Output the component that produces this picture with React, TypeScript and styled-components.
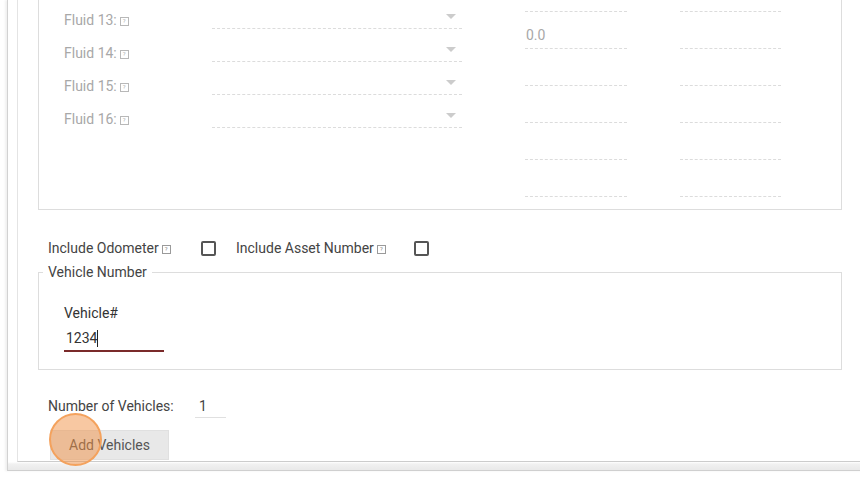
import styled, { createGlobalStyle } from 'styled-components';

const GlobalStyle = createGlobalStyle`
  html, body {
    margin: 0;
    padding: 0;
    background: #ffffff;
  }
  body {
    font-family: Roboto, "Liberation Sans", Arial, sans-serif;
    font-size: 14px;
    color: #444444;
  }
`;

const Page = styled.div`
  position: relative;
  width: 860px;
  height: 480px;
  overflow: hidden;
  padding-left: 7px;
  box-sizing: border-box;
`;

const Outer = styled.div`
  width: 900px;
  height: 471px;
  box-sizing: border-box;
  padding: 0 0 8px 9px;
  border-left: 1px solid #d2d2d2;
  border-bottom: 1px solid #cfcfcf;
  box-shadow: -2px 0 2px rgba(0, 0, 0, 0.06);
  background: linear-gradient(to bottom, #ffffff 462px, #f1f1f1 464px, #e9e9e9);
`;

const Inner = styled.div`
  height: 462px;
  box-sizing: border-box;
  padding-left: 20px;
  border-left: 1px solid #e4e4e4;
  border-bottom: 1px solid #cccccc;
  background: #ffffff;
  display: flex;
  flex-direction: column;
  align-items: flex-start;
`;

const FluidBox = styled.div`
  width: 804px;
  height: 210px;
  box-sizing: border-box;
  border: 1px solid #dddddd;
  border-top: none;
  padding-left: 25px;
  display: grid;
  grid-template-columns: 398px 165px 154px;
  align-items: start;
`;

const FluidList = styled.div`
  display: flex;
  flex-direction: column;
`;

const FluidRow = styled.div`
  display: grid;
  grid-template-columns: 148px 250px;
  height: 33px;
  padding-top: 4px;
  box-sizing: border-box;
  align-items: start;
`;

const FluidLabel = styled.div`
  margin-top: 8px;
  line-height: 16px;
  color: #a8a8a8;
  display: flex;
  align-items: center;
  gap: 3px;
`;

const Help = styled.span<{ $dim?: boolean }>`
  display: inline-flex;
  align-items: center;
  justify-content: center;
  width: 7px;
  height: 7px;
  border: 1px solid ${(p) => (p.$dim ? '#b8b8b8' : '#9a9a9a')};
  font-size: 6px;
  line-height: 6px;
  color: ${(p) => (p.$dim ? '#b0b0b0' : '#888888')};
  margin-top: 2px;
`;

const Select = styled.div`
  height: 25px;
  box-sizing: border-box;
  border-bottom: 1px dashed #dcdcdc;
  display: flex;
  justify-content: flex-end;
  align-items: flex-start;
  padding: 10px 6px 0 0;
`;

const Arrow = styled.span`
  width: 0;
  height: 0;
  border-left: 5px solid transparent;
  border-right: 5px solid transparent;
  border-top: 5px solid #cccccc;
`;

const InputColumn = styled.div<{ $offset: number; $width: number }>`
  display: flex;
  flex-direction: column;
  padding-left: ${(p) => p.$offset}px;
  width: ${(p) => p.$width}px;
  box-sizing: content-box;
`;

const TotalInput = styled.div<{ $short?: boolean }>`
  height: ${(p) => (p.$short ? '12px' : '37px')};
  box-sizing: border-box;
  border-bottom: 1px dashed #dcdcdc;
  display: flex;
  align-items: flex-end;
  padding: 0 0 5px 1px;
  line-height: 16px;
  color: #a8a8a8;
`;

const OptionsRow = styled.div`
  margin: 28px 0 0 10px;
  height: 20px;
  display: flex;
  align-items: center;
`;

const OptionLabel = styled.div<{ $width: number }>`
  width: ${(p) => p.$width}px;
  display: flex;
  align-items: center;
  gap: 3px;
  line-height: 16px;
`;

const Checkbox = styled.span<{ $gap?: number }>`
  width: 15px;
  height: 15px;
  box-sizing: border-box;
  border: 2px solid #555555;
  border-radius: 2px;
  margin-right: ${(p) => p.$gap ?? 0}px;
`;

const Fieldset = styled.fieldset`
  margin: 6px 0 0;
  width: 804px;
  box-sizing: border-box;
  border: 1px solid #dddddd;
  padding: 0 0 17px;
  min-width: 0;
`;

const Legend = styled.legend`
  margin-left: 4px;
  padding: 0 5px;
  line-height: 16px;
  color: #444444;
`;

const FieldBody = styled.div`
  padding: 25px 0 0 25px;
  display: flex;
  flex-direction: column;
  align-items: flex-start;
`;

const FieldLabel = styled.div`
  line-height: 16px;
  color: #333333;
  margin-bottom: 9px;
`;

const TextField = styled.div`
  width: 100px;
  height: 22px;
  box-sizing: border-box;
  padding: 0 2px;
  border-bottom: 2px solid #7a2a2a;
  display: flex;
  align-items: flex-start;
  line-height: 17px;
  color: #333333;
`;

const Caret = styled.span`
  width: 1px;
  height: 17px;
  background: #222222;
`;

const CountRow = styled.div`
  margin: 28px 0 0 10px;
  display: flex;
  align-items: flex-start;
`;

const CountLabel = styled.div`
  width: 147px;
  line-height: 16px;
  color: #444444;
`;

const CountInput = styled.div`
  width: 31px;
  box-sizing: border-box;
  padding: 0 0 3px 4px;
  border-bottom: 1px solid #e0e0e0;
  line-height: 16px;
  color: #444444;
`;

const Button = styled.button`
  margin: 12px 0 0 12px;
  width: 119px;
  height: 30px;
  border: 1px solid #e0e0e0;
  background: #e8e8e8;
  color: #555555;
  font-family: Roboto, "Liberation Sans", Arial, sans-serif;
  font-size: 14px;
  padding: 0;
  cursor: pointer;
`;

const ClickMarker = styled.div`
  position: absolute;
  left: 49px;
  top: 413px;
  width: 53px;
  height: 53px;
  box-sizing: border-box;
  border-radius: 50%;
  border: 2px solid rgba(243, 160, 90, 0.95);
  background: rgba(240, 140, 60, 0.48);
  pointer-events: none;
`;

const fluids = ['Fluid 13:', 'Fluid 14:', 'Fluid 15:', 'Fluid 16:'];
const totals = ['', '0.0', '', '', '', ''];

const App = () => {
  return (
    <>
      <GlobalStyle />
      <Page>
        <Outer>
          <Inner>
            <FluidBox>
              <FluidList>
                {fluids.map((name) => (
                  <FluidRow key={name}>
                    <FluidLabel>
                      {name} <Help $dim>?</Help>
                    </FluidLabel>
                    <Select>
                      <Arrow />
                    </Select>
                  </FluidRow>
                ))}
              </FluidList>
              <InputColumn $offset={63} $width={102}>
                {totals.map((v, i) => (
                  <TotalInput key={i} $short={i === 0}>{v}</TotalInput>
                ))}
              </InputColumn>
              <InputColumn $offset={53} $width={101}>
                {totals.map((_, i) => (
                  <TotalInput key={i} $short={i === 0} />
                ))}
              </InputColumn>
            </FluidBox>

            <OptionsRow>
              <OptionLabel $width={153}>
                Include Odometer <Help>?</Help>
              </OptionLabel>
              <Checkbox $gap={20} />
              <OptionLabel $width={178}>
                Include Asset Number <Help>?</Help>
              </OptionLabel>
              <Checkbox />
            </OptionsRow>

            <Fieldset>
              <Legend>Vehicle Number</Legend>
              <FieldBody>
                <FieldLabel>Vehicle#</FieldLabel>
                <TextField>
                  1234
                  <Caret />
                </TextField>
              </FieldBody>
            </Fieldset>

            <CountRow>
              <CountLabel>Number of Vehicles:</CountLabel>
              <CountInput>1</CountInput>
            </CountRow>

            <Button>Add Vehicles</Button>
          </Inner>
        </Outer>
        <ClickMarker />
      </Page>
    </>
  );
};

export default App;
